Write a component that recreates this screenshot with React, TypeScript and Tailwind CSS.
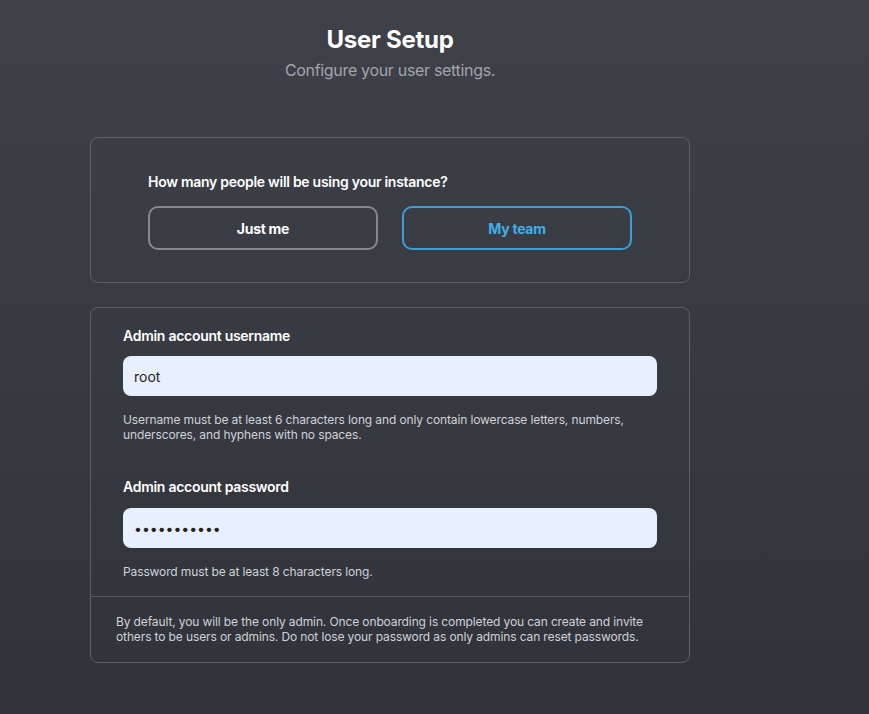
import { useState } from "react";

export default function App() {
  const [mode, setMode] = useState<"solo" | "team">("team");

  return (
    <div
      className="min-h-[714px] w-full bg-gradient-to-b from-[#3e4148] to-[#30333a] text-white"
      style={{ fontFamily: "Inter, 'Noto Sans', sans-serif" }}
    >
      <div className="ml-[90px] flex w-[600px] flex-col items-center pt-[24px] pb-[52px]">
        <h1 className="text-[24px] font-bold leading-[32px] tracking-[-0.01em]">User Setup</h1>
        <p className="mt-[4px] text-[16px] leading-[20px] text-[#a2a5ab] tracking-[-0.02em]">
          Configure your user settings.
        </p>

        <div className="mt-[57px] flex w-full flex-col rounded-[8px] border border-[#5c5f65] px-[57px] pt-[34px] pb-[32px]">
          <p className="text-[14px] font-semibold leading-[20px] tracking-[-0.02em]">
            How many people will be using your instance?
          </p>
          <div className="mt-[14px] flex gap-[24px]">
            <button
              onClick={() => setMode("solo")}
              className={`h-[44px] w-[230px] rounded-[10px] border-2 text-[14px] font-bold tracking-[-0.02em] ${
                mode === "solo" ? "border-[#3aa0d5] text-[#3fb0ea]" : "border-[#86888c] text-white"
              }`}
            >
              Just me
            </button>
            <button
              onClick={() => setMode("team")}
              className={`h-[44px] w-[230px] rounded-[10px] border-2 text-[14px] font-bold tracking-[-0.02em] ${
                mode === "team" ? "border-[#3aa0d5] text-[#3fb0ea]" : "border-[#86888c] text-white"
              }`}
            >
              My team
            </button>
          </div>
        </div>

        <div className="mt-[24px] flex w-full flex-col rounded-[8px] border border-[#5c5f65]">
          <div className="px-[32px] pt-[18px] pb-[16px]">
            <label className="block text-[14px] font-semibold leading-[20px] tracking-[-0.02em]">
              Admin account username
            </label>
            <input
              defaultValue="root"
              className="mt-[10px] h-[40px] w-[534px] rounded-[8px] bg-[#e8effd] px-[11px] text-[14px] text-[#1f2228] outline-none"
            />
            <p className="mt-[16px] text-[12px] leading-[15px] text-[#cfd2d7] tracking-[-0.01em]">
              Username must be at least 6 characters long and only contain lowercase letters, numbers,
              underscores, and hyphens with no spaces.
            </p>
            <label className="mt-[35px] block text-[14px] font-semibold leading-[20px] tracking-[-0.02em]">
              Admin account password
            </label>
            <input
              type="password"
              defaultValue="password123"
              className="mt-[11px] h-[40px] w-[534px] rounded-[8px] bg-[#e8effd] px-[11px] text-[14px] text-[#1f2228] outline-none"
            />
            <p className="mt-[16px] text-[12px] leading-[16px] text-[#cfd2d7] tracking-[-0.01em]">
              Password must be at least 8 characters long.
            </p>
          </div>
          <div className="border-t border-[#55585e] px-[25px] pt-[17px] pb-[18px]">
            <p className="text-[12px] leading-[15px] text-[#cfd2d7] tracking-[-0.01em]">
              By default, you will be the only admin. Once onboarding is completed you can create and invite
              others to be users or admins. Do not lose your password as only admins can reset passwords.
            </p>
          </div>
        </div>
      </div>
    </div>
  );
}
